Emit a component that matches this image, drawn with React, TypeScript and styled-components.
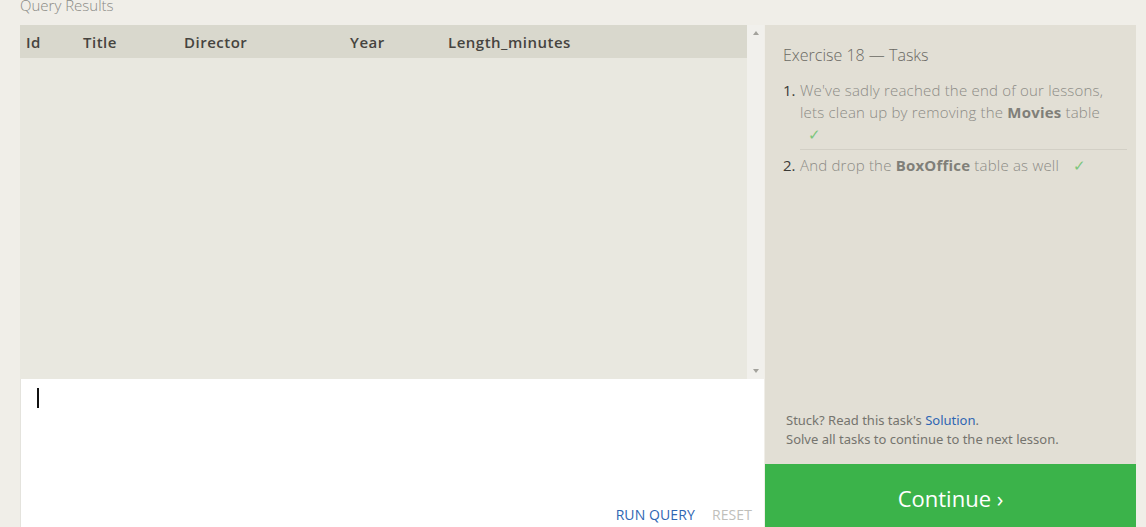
import React from "react";
import styled, { createGlobalStyle } from "styled-components";

const Global = createGlobalStyle`
  html, body { margin: 0; padding: 0; background: #f0eee8; overflow: hidden; }
  body { font-family: "Open Sans", "Liberation Sans", sans-serif; }
`;

const Page = styled.div`
  width: 1146px;
  height: 527px;
  padding-left: 20px;
  box-sizing: border-box;
  overflow: hidden;
`;

const SectionTitle = styled.div`
  height: 25px;
  margin-top: -5px;
  font-size: 15px;
  font-weight: 300;
  color: #8a8a86;
  line-height: 20px;
  box-sizing: border-box;
  margin-bottom: 5px;
`;

const Main = styled.div`
  display: flex;
  align-items: stretch;
`;

const Left = styled.div`
  width: 744px;
  display: flex;
  flex-direction: column;
`;

const Results = styled.div`
  height: 354px;
  display: flex;
`;

const Table = styled.div`
  flex: 1;
  background: #e9e8e0;
`;

const HeaderRow = styled.div`
  display: grid;
  grid-template-columns: 57px 101px 166px 98px 1fr;
  height: 33px;
  align-items: center;
  background: #d9d8cd;
  padding-left: 6px;
`;

const HeaderCell = styled.div`
  font-size: 15px;
  font-weight: 600;
  color: #46443f;
  letter-spacing: 0.5px;
`;

const ScrollBar = styled.div`
  width: 17px;
  background: #f1f0ec;
  display: flex;
  flex-direction: column;
  justify-content: space-between;
  align-items: center;
  padding: 6px 0;
  box-sizing: border-box;
`;

const Arrow = styled.div<{ $down?: boolean }>`
  width: 0;
  height: 0;
  border-left: 3.5px solid transparent;
  border-right: 3.5px solid transparent;
  ${(p) =>
    p.$down
      ? "border-top: 4px solid #a3a29c;"
      : "border-bottom: 4px solid #a3a29c;"}
`;

const Editor = styled.div`
  height: 148px;
  background: #fff;
  border-left: 1px solid #e4e3dd;
  display: flex;
  flex-direction: column;
  justify-content: space-between;
`;

const Caret = styled.div`
  width: 2px;
  height: 20px;
  background: #111;
  margin: 9px 0 0 16px;
`;

const Actions = styled.div`
  display: flex;
  justify-content: flex-end;
  gap: 17px;
  padding-right: 12px;
  margin-bottom: 2px;
`;

const ActionLink = styled.span<{ $muted?: boolean }>`
  font-family: "Open Sans", sans-serif;
  font-size: 14px;
  color: ${(p) => (p.$muted ? "#c0bfbb" : "#2f66b3")};
  letter-spacing: 0.1px;
  line-height: 20px;
`;

const Right = styled.div`
  width: 371px;
  margin-left: 1px;
  display: flex;
  flex-direction: column;
  height: 502px;
`;

const TaskPanel = styled.div`
  flex: 1;
  background: #e2dfd5;
  padding: 19px 9px 0 18px;
  display: flex;
  flex-direction: column;
`;

const TaskHeading = styled.div`
  font-size: 16px;
  font-weight: 300;
  color: #6a6963;
  line-height: 22px;
  margin-bottom: 13px;
`;

const TaskList = styled.ol`
  margin: 0;
  padding: 0;
  list-style: none;
  flex: 1;
`;

const TaskItem = styled.li`
  display: flex;
  font-size: 15px;
  font-weight: 300;
  line-height: 22px;
  letter-spacing: 0.2px;
  color: #8c8b85;
  margin-bottom: 4px;
`;

const Num = styled.span`
  width: 17px;
  flex: none;
  color: #3b3a36;
  font-weight: 400;
  letter-spacing: 0;
`;

const TaskBody = styled.div<{ $border?: boolean }>`
  flex: 1;
  ${(p) => (p.$border ? "border-bottom: 1px solid #d2cfc5; padding-bottom: 4px;" : "")}
`;

const Strong = styled.b`
  font-weight: 700;
  color: #807f79;
`;

const Check = styled.span<{ $block?: boolean }>`
  color: #7cc67c;
  font-size: 15px;
  font-weight: 300;
  margin-left: ${(p) => (p.$block ? "8px" : "14px")};
`;

const Help = styled.div`
  font-family: "Noto Sans", "Open Sans", sans-serif;
  font-size: 13px;
  line-height: 19px;
  color: #75746e;
  padding: 0 0 15px 3px;
`;

const SolutionLink = styled.span`
  color: #2f66b3;
`;

const ContinueButton = styled.div`
  height: 63px;
  background: #3bb34a;
  color: #fff;
  font-size: 22px;
  font-weight: 400;
  display: flex;
  justify-content: center;
  padding-top: 19px;
  box-sizing: border-box;
  line-height: 30px;
`;

export default function App() {
  return (
    <>
      <Global />
      <Page>
        <SectionTitle>Query Results</SectionTitle>
        <Main>
          <Left>
            <Results>
              <Table>
                <HeaderRow>
                  <HeaderCell>Id</HeaderCell>
                  <HeaderCell>Title</HeaderCell>
                  <HeaderCell>Director</HeaderCell>
                  <HeaderCell>Year</HeaderCell>
                  <HeaderCell>Length_minutes</HeaderCell>
                </HeaderRow>
              </Table>
              <ScrollBar>
                <Arrow />
                <Arrow $down />
              </ScrollBar>
            </Results>
            <Editor>
              <Caret />
              <Actions>
                <ActionLink>RUN QUERY</ActionLink>
                <ActionLink $muted>RESET</ActionLink>
              </Actions>
            </Editor>
          </Left>
          <Right>
            <TaskPanel>
              <TaskHeading>Exercise 18 — Tasks</TaskHeading>
              <TaskList>
                <TaskItem>
                  <Num>1.</Num>
                  <TaskBody $border>
                    We've sadly reached the end of our lessons,
                    <br />
                    lets clean up by removing the <Strong>Movies</Strong> table
                    <br />
                    <Check $block>✓</Check>
                  </TaskBody>
                </TaskItem>
                <TaskItem>
                  <Num>2.</Num>
                  <TaskBody>
                    And drop the <Strong>BoxOffice</Strong> table as well
                    <Check>✓</Check>
                  </TaskBody>
                </TaskItem>
              </TaskList>
              <Help>
                Stuck? Read this task's <SolutionLink>Solution</SolutionLink>.
                <br />
                Solve all tasks to continue to the next lesson.
              </Help>
            </TaskPanel>
            <ContinueButton>Continue ›</ContinueButton>
          </Right>
        </Main>
      </Page>
    </>
  );
}
